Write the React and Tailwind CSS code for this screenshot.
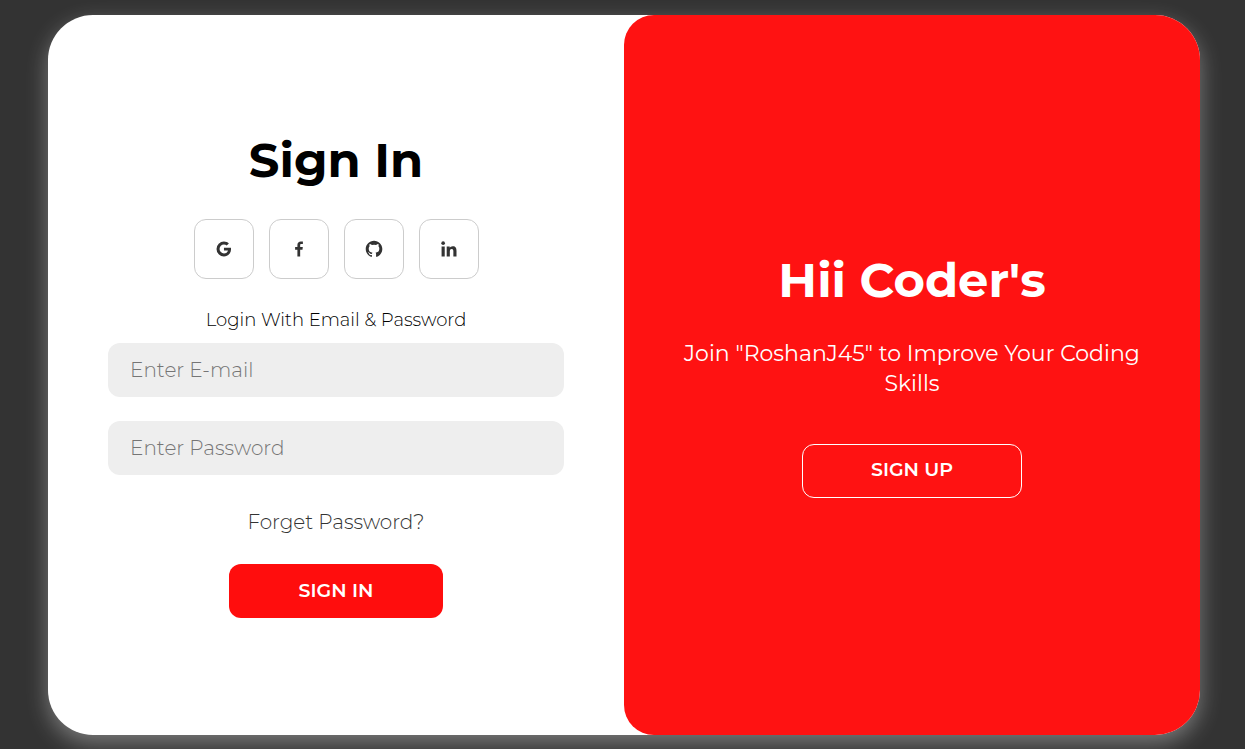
import { BiLogoGoogle, BiLogoFacebook, BiLogoGithub, BiLogoLinkedin } from "react-icons/bi";

const providers = [
  { name: "Google", Icon: BiLogoGoogle },
  { name: "Facebook", Icon: BiLogoFacebook },
  { name: "GitHub", Icon: BiLogoGithub },
  { name: "LinkedIn", Icon: BiLogoLinkedin },
];

function Field({ label, type }) {
  return (
    <input
      type={type}
      aria-label={label}
      placeholder={label}
      className="h-[54px] w-full rounded-xl bg-[#eeeeee] px-[22px] text-xl font-light text-[#333333] outline-none placeholder:text-[#757575]"
    />
  );
}

function SignInForm() {
  return (
    <form
      className="flex w-1/2 flex-col items-center justify-center px-[60px] pb-0.5"
      onSubmit={(event) => event.preventDefault()}
    >
      <h1 className="text-5xl leading-[60px] font-bold text-black">Sign In</h1>
      <div className="mt-[29px] flex gap-[15px]">
        {providers.map(({ name, Icon }) => (
          <a
            key={name}
            href="#"
            aria-label={name}
            className="flex size-[60px] items-center justify-center rounded-xl border border-[#cccccc] text-[#333333]"
          >
            <Icon size={20} />
          </a>
        ))}
      </div>
      <p className="mt-[29px] text-lg leading-6 font-light text-black">Login With Email &amp; Password</p>
      <div className="mt-[11px] flex w-full flex-col gap-6">
        <Field label="Enter E-mail" type="email" />
        <Field label="Enter Password" type="password" />
      </div>
      <a href="#" className="mt-[35px] text-xl leading-6 font-light text-[#333333]">
        Forget Password?
      </a>
      <button type="submit" className="mt-[30px] h-[54px] w-[214px] rounded-xl bg-[#ff0d0d] text-[19px] font-semibold text-white">
        SIGN IN
      </button>
    </form>
  );
}

function WelcomePanel() {
  return (
    <section className="flex w-1/2 flex-col items-center justify-center rounded-[30px] bg-[#ff1212] px-[45px] pb-[3px] text-center text-white">
      <h2 className="text-5xl leading-[60px] font-bold">Hii Coder's</h2>
      <p className="mt-[29px] text-[22px] leading-[30px]">
        Join "RoshanJ45" to Improve Your Coding Skills
      </p>
      <button type="button" className="mt-[45px] h-[54px] w-[220px] rounded-xl border border-white text-[19px] font-semibold">
        SIGN UP
      </button>
    </section>
  );
}

export default function App() {
  return (
    <main className="flex min-h-screen bg-[#333333] pt-[15px] pr-[45px] pb-[14px] pl-12 font-['Montserrat','Inter',sans-serif]">
      <div className="flex flex-1 overflow-hidden rounded-[45px] bg-white shadow-[0_8px_22px_rgba(255,255,255,0.35)]">
        <SignInForm />
        <WelcomePanel />
      </div>
    </main>
  );
}
